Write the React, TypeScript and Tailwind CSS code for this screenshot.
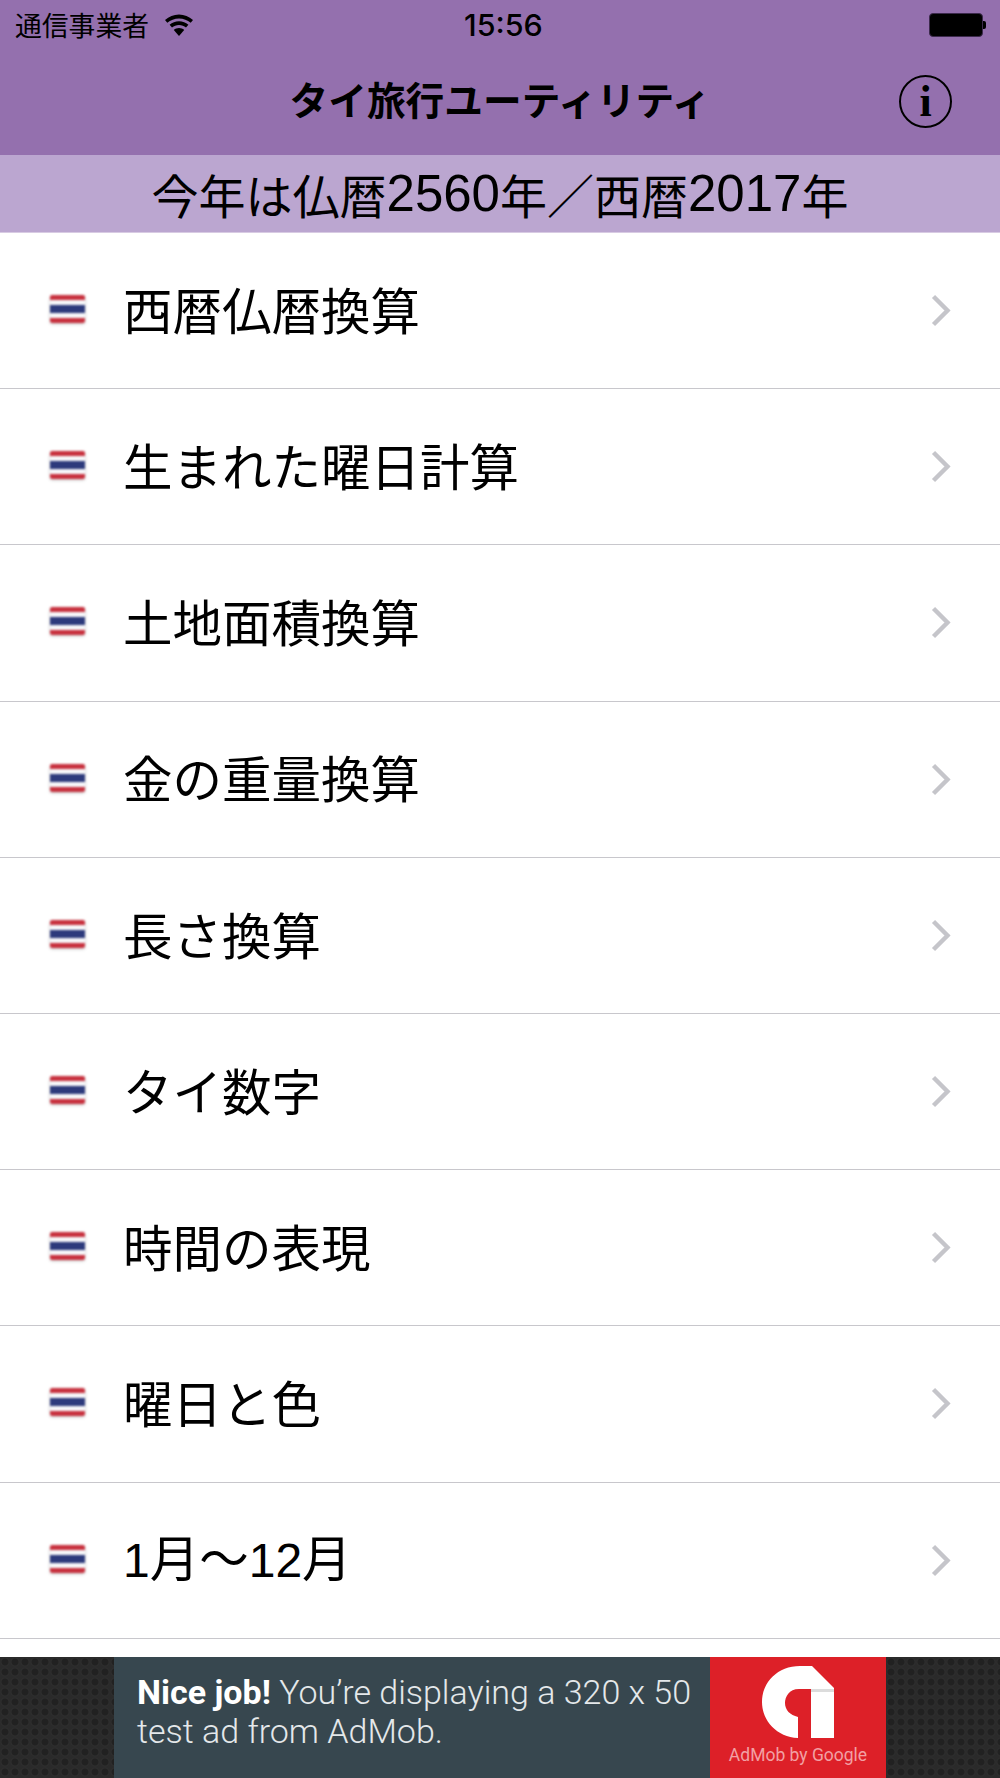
import type { ReactNode } from 'react'

const jpFont = "font-['Noto_Sans_CJK_JP',sans-serif]"

// digits in the reference are a Helvetica-like face, wider than the CJK font's own
function Num({ children, className }: { children: ReactNode; className: string }) {
  return <span className={`font-['Liberation_Sans',sans-serif] ${className}`}>{children}</span>
}

const items: ReactNode[] = [
  '西暦仏暦換算',
  '生まれた曜日計算',
  '土地面積換算',
  '金の重量換算',
  '長さ換算',
  'タイ数字',
  '時間の表現',
  '曜日と色',
  <>
    <Num className="text-[48px]">1</Num>月〜<Num className="text-[48px]">12</Num>月
  </>,
]

function Flag() {
  return (
    <div className="mt-[-3px] flex h-[28px] w-[35px] flex-col overflow-hidden rounded-[2px] shadow-[0_1px_3px_rgba(0,0,0,0.25)] blur-[0.8px]">
      <div className="h-[5px] bg-[#c8323f]" />
      <div className="h-[5px] bg-[#f6f6f8]" />
      <div className="h-[8px] bg-[#2d3a7c]" />
      <div className="h-[5px] bg-[#f6f6f8]" />
      <div className="h-[5px] bg-[#c8323f]" />
    </div>
  )
}

function Wifi() {
  return (
    <svg width="30" height="24" viewBox="0 0 30 24" fill="currentColor">
      <path d="M15 1.5C9.6 1.5 5 3.6 1 7l2.3 2.8C6.5 7.1 10.5 5.4 15 5.4s8.5 1.7 11.7 4.4L29 7C25 3.6 20.4 1.5 15 1.5z" />
      <path d="M15 8.2c-3.6 0-6.8 1.3-9.4 3.5l2.4 2.8c1.9-1.6 4.3-2.5 7-2.5s5.1.9 7 2.5l2.4-2.8c-2.6-2.2-5.8-3.5-9.4-3.5z" />
      <path d="M15 15c-2 0-3.7.7-5.2 1.9L15 23l5.2-6.1C18.7 15.7 17 15 15 15z" />
    </svg>
  )
}

function Chevron() {
  return (
    <svg width="20" height="33" viewBox="0 0 20 33" fill="none" stroke="#c5c5ca" strokeWidth="4.4">
      <path d="M2.5 2.5 L16.5 16.5 L2.5 30.5" />
    </svg>
  )
}

function AdMobLogo() {
  return (
    <svg width="72" height="72" viewBox="0 0 72 72">
      <path
        d="M38 0h12l22 22v50H49V23H37C27 23 23 31 23 37c0 7 5 12 13 14v21C15 71 0 55 0 36 0 16 16 0 38 0z"
        fill="#ffffff"
      />
      <rect x="49" y="23" width="23" height="3" fill="#dcdcdc" />
    </svg>
  )
}

function AdSide() {
  return (
    <div className="h-full bg-[#2a2a2a] bg-[radial-gradient(circle,#212121_3px,#2e2e2e_4px,#2a2a2a_5px)] bg-[length:10px_10px]" />
  )
}

export default function App() {
  return (
    <div className={`flex h-[1778px] w-[1000px] flex-col overflow-hidden bg-white text-black ${jpFont}`}>
      <header className="relative h-[155px] shrink-0 bg-[#9470ae]">
        <div className="flex h-[50px] items-center justify-between pl-[15px] pr-[14px]">
          <div className="flex items-center gap-[15px]">
            <span className="text-[26.8px] leading-none">通信事業者</span>
            <Wifi />
          </div>
          <div className="flex items-center">
            <div className="h-[24px] w-[54px] rounded-[4px] border border-[#3c2a4c] bg-black" />
            <div className="h-[8px] w-[3px] rounded-r-[2px] bg-black" />
          </div>
        </div>
        <span className="absolute left-[464px] top-[8px] font-['Inter',sans-serif] text-[30.5px] font-medium leading-[34px]">15:56</span>
        <div className="flex h-[105px] items-center justify-center pb-[8px] text-[38.7px] font-bold leading-none">
          タイ旅行ユーティリティ
        </div>
        <div className="absolute left-[899px] top-[75px] flex h-[53px] w-[53px] items-center justify-center rounded-full border-[2px] border-black font-['Liberation_Serif',serif] text-[44px] font-bold leading-none">
          i
        </div>
      </header>

      <div className="flex h-[78px] shrink-0 items-center justify-center border-b border-[#d8cbe3] bg-[#bba6d0] text-[47px] leading-none">
        今年は仏暦<Num className="text-[51px]">2560</Num>年／西暦<Num className="text-[51px]">2017</Num>年
      </div>

      <ul className="flex-1">
        {items.map((label, i) => (
          <li key={i} className="flex h-[156.2px] items-center border-b border-[#c8c7cc] pl-[50px] pr-[49px]">
            <Flag />
            <span className="ml-[38px] mt-[-4px] flex-1 text-[49.5px] leading-none">{label}</span>
            <Chevron />
          </li>
        ))}
      </ul>

      <footer className="flex h-[121px] shrink-0">
        <div className="w-[114px]"><AdSide /></div>
        <div className="w-[596px] whitespace-nowrap bg-[#37474f] pl-[23px] pt-[16px] font-['Roboto',sans-serif] text-[34px] font-light leading-[39px] text-[#e4e8ea]">
          <b className="font-bold text-white">Nice job!</b> You’re displaying a 320 x 50
          <br />
          test ad from AdMob.
        </div>
        <div className="flex w-[176px] flex-col items-center bg-[#dd2028] pt-[9px]">
          <AdMobLogo />
          <span className="mt-[9px] font-['Roboto',sans-serif] text-[17.5px] leading-none text-[#f2a0a4]">AdMob by Google</span>
        </div>
        <div className="flex-1"><AdSide /></div>
      </footer>
    </div>
  )
}
